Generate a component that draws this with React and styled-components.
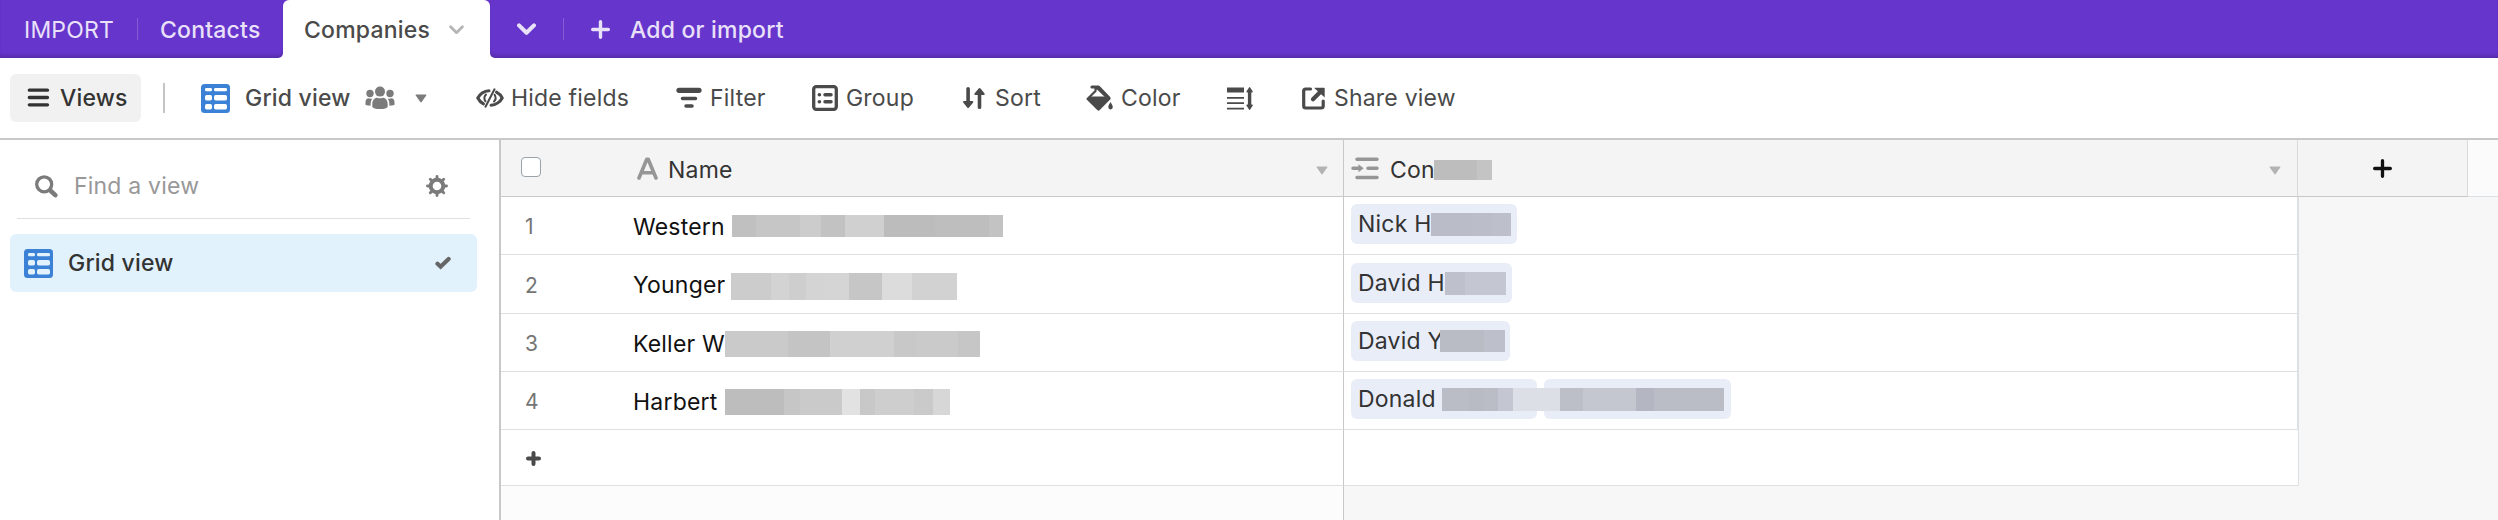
import React from 'react'
import styled, { createGlobalStyle } from 'styled-components'

const GlobalStyle = createGlobalStyle`
  * { box-sizing: border-box; }
  body {
    margin: 0;
    font-family: Inter, "Liberation Sans", sans-serif;
    font-size: 23px;
    letter-spacing: 0.2px;
    color: #333;
    background: #fff;
  }
  svg { display: block; flex: none; }
`

const Page = styled.div`
  display: flex;
  flex-direction: column;
  width: 2498px;
  height: 520px;
  overflow: hidden;
`

const Label = styled.span`
  display: block;
  flex: none;
  width: ${p => p.$w}px;
  margin-left: ${p => p.$ml || 0}px;
  font-weight: ${p => p.$weight || 400};
  line-height: 28px;
  white-space: nowrap;
`
const Gap = styled.div`
  flex: none;
  width: ${p => p.$w}px;
`
const Spacer = styled.div`
  flex: 1;
`

// table tabs
const TabBar = styled.div`
  display: flex;
  flex: none;
  height: 58px;
  color: #e9e0f9;
  background: #fff;
`
const TabGroup = styled.div`
  display: flex;
  flex: ${p => (p.$grow ? 1 : 'none')};
  background: #6635cc;
  border-radius: ${p => (p.$grow ? '0 0 0 5px' : '0 0 5px 0')};
  box-shadow: inset 0 -4px 4px -2px rgba(0, 0, 0, 0.2);
`
const ActiveSlot = styled.div`
  background: linear-gradient(#6635cc 10px, #fff 10px);
`
const Tab = styled.div`
  display: flex;
  align-items: center;
  height: 58px;
  padding: 1px 0 0 ${p => p.$pad}px;
  width: ${p => p.$w}px;
`
const ActiveTab = styled(Tab)`
  color: #4a4a4a;
  background: #fff;
  border-radius: 6px 6px 0 0;
`
const TabDivider = styled.div`
  width: 1px;
  height: 22px;
  margin-top: 18px;
  background: rgba(255, 255, 255, 0.2);
`

// toolbar
const Toolbar = styled.div`
  display: flex;
  flex: none;
  align-items: center;
  height: 82px;
  padding-left: 10px;
  border-bottom: 2px solid #c8c8c8;
  color: #4a4a4a;
`
const ViewsButton = styled.div`
  display: flex;
  align-items: center;
  width: 131px;
  height: 48px;
  padding-left: 17px;
  border-radius: 6px;
  background: #f1f1f1;
  color: #333;
`
const ToolbarDivider = styled.div`
  width: 2px;
  height: 30px;
  margin: 0 36px 0 22px;
  background: #c4c4c4;
`
const Tool = styled.div`
  display: flex;
  align-items: center;
  width: ${p => p.$w}px;
`

const Body = styled.div`
  display: flex;
  flex: 1;
`

// sidebar
const Sidebar = styled.div`
  width: 501px;
  padding: 0 22px 0 10px;
  border-right: 2px solid #c8c8c8;
`
const Search = styled.div`
  display: flex;
  align-items: center;
  height: 79px;
  margin: 0 7px;
  padding: 14px 22px 0 18px;
  border-bottom: 1px solid #e0e0e0;
  color: #989898;
`
const ViewItem = styled.div`
  display: flex;
  align-items: center;
  height: 58px;
  margin-top: 15px;
  padding: 0 26px 0 14px;
  border-radius: 6px;
  background: #e1f2fd;
`

// grid
const Grid = styled.div`
  flex: 1;
  background: #f7f7f7;
`
const Row = styled.div`
  display: flex;
  height: ${p => p.$h}px;
`
const Cell = styled.div`
  display: flex;
  align-items: center;
  border-bottom: 1px solid #dfdfdf;
  background: #fff;
`
const NameCell = styled(Cell)`
  width: 843px;
  padding-top: 2px;
  border-right: 1px solid #c8c8c8;
  color: #111;
`
const LinkCell = styled(Cell)`
  align-items: flex-start;
  width: 955px;
  padding: ${p => p.$pt || 0}px 0 0 7px;
  border-right: ${p => p.$edge || 2}px solid #dbe0e5;
`
const NameHead = styled(Cell)`
  width: 843px;
  padding-top: 4px;
  border-right: 1px solid #c8c8c8;
  border-bottom-color: #c8c8c8;
  background: #f4f4f4;
`
const LinkHead = styled(NameHead)`
  width: 954px;
  padding-left: 7px;
  border-right-color: #dadada;
`
const HeadIcon = styled.div`
  margin-bottom: 3px;
`
const AddFieldCell = styled(Cell)`
  justify-content: center;
  width: 170px;
  padding-top: 1px;
  border-right: 1px solid #dadada;
  border-bottom-color: #c8c8c8;
  background: #f4f4f4;
  color: #111;
`
const HeadRest = styled.div`
  flex: 1;
  border-bottom: 1px solid #dbe0e5;
  background: #fbfbfb;
`
const EmptyName = styled.div`
  width: 843px;
  border-right: 1px solid #c8c8c8;
  background: #fcfcfc;
`
const Checkbox = styled.div`
  width: 20px;
  height: 20px;
  margin: 0 96px 6px 20px;
  border: 1px solid #98a2aa;
  border-radius: 4px;
  background: #fff;
`
const RowNumber = styled.div`
  width: 132px;
  padding-left: 24px;
  font-size: 21px;
  color: #757575;
`
const AddRow = styled.div`
  padding-left: 25px;
  color: #4a4a4a;
`
const Pill = styled.div`
  display: flex;
  align-items: center;
  width: ${p => p.$w}px;
  height: 40px;
  margin-right: 7px;
  padding-left: 7px;
  border-radius: 6px;
  background: #e9edf8;
`

// blocks that hide the rest of a name, may run over into the next pill
const MaskBar = styled.div`
  display: flex;
  flex: none;
  position: relative;
  height: ${p => p.$h}px;
  margin-top: ${p => p.$mt || 0}px;
`
const MaskBlock = styled.div`
  width: ${p => p.$w}px;
  background: ${p => p.$c};
`

const Mask = ({ h, mt, blocks }) => (
  <MaskBar $h={h} $mt={mt}>
    {blocks.map(([w, c], i) => <MaskBlock key={i} $w={w} $c={c} />)}
  </MaskBar>
)

const GridIcon = ({ hole = '#fff' }) => (
  <svg width="29" height="29" viewBox="0 0 29 29">
    <rect width="29" height="29" rx="3.5" fill="#3b82d6" />
    <g fill={hole}>
      <rect x="4" y="4" width="7" height="3.3" rx="1.4" />
      <rect x="13" y="4" width="13" height="3.3" rx="1.4" />
      <rect x="4" y="11" width="7" height="5.5" rx="1.7" />
      <rect x="13" y="11" width="13" height="5.5" rx="1.7" />
      <rect x="4" y="20" width="7" height="5.5" rx="1.7" />
      <rect x="13" y="20" width="13" height="5.5" rx="1.7" />
    </g>
  </svg>
)

const MenuIcon = () => (
  <svg width="23" height="20" viewBox="0 0 23 20" stroke="currentColor" strokeWidth="3.3" strokeLinecap="round">
    <path d="M2.3 2.200h18.200M2.300 9.500h18.200M2.300 16.800h18.200" />
  </svg>
)

const ChevronIcon = ({ w = 14, stroke = 2.6, color = 'currentColor' }) => (
  <svg width={w} height={w * 0.66} viewBox="0 0 14 9.2" fill="none" stroke={color} strokeWidth={stroke} strokeLinecap="round" strokeLinejoin="round">
    <path d="M1.5 1.7 7 7.2l5.5-5.5" />
  </svg>
)

const PlusIcon = ({ size = 20, stroke = 3.4 }) => (
  <svg width={size} height={size} viewBox={`0 0 ${size} ${size}`} stroke="currentColor" strokeWidth={stroke} strokeLinecap="round">
    <path d={`M${size / 2} ${stroke / 2}V${size - stroke / 2}M${stroke / 2} ${size / 2}H${size - stroke / 2}`} />
  </svg>
)

const CaretIcon = ({ color = '#b3b3b3' }) => (
  <svg width="12" height="9" viewBox="0 0 12 9">
    <path d="M1.2.5h9.600q.9 0 .4.900L6.700 8q-.7.900-1.400 0L.800 1.400Q.3.500 1.200.5Z" fill={color} />
  </svg>
)

const PeopleIcon = () => (
  <svg width="30" height="24" viewBox="0 0 30 24" fill="#7b7b7b">
    <circle cx="15" cy="5.6" r="5" />
    <circle cx="5" cy="7.5" r="3.7" />
    <circle cx="25" cy="7.5" r="3.7" />
    <path d="M7.3 18c0-4.500 3-6.300 5-6.300 1.800.8 3.600.8 5.400 0 2 0 5 1.800 5 6.300v2.700q-1 2.300-7.700 2.300t-7.700-2.300Z" />
    <path d="M.5 16.500c0-3 1.500-4 3-4.200 1.500.6 2.800.5 4 .2C5.800 14.500 5.500 17 5.600 19.700Q.5 19.500.5 18.500ZM29.500 16.500c0-3-1.500-4-3-4.200-1.500.6-2.800.5-4 .2 1.700 2 2 4.500 1.900 7.200q5.100-.2 5.100-1.200Z" />
  </svg>
)

const HideIcon = () => (
  <svg width="28" height="20" viewBox="0 0 28 20" fill="none" stroke="currentColor" strokeLinecap="round">
    <path d="M13 2.700C8 2.700 3.500 6.500 1.800 10c1.200 2.500 3.200 4.600 5.700 5.900M15 17.300c5-.2 9.500-3.800 11.200-7.300-1.200-2.500-3.200-4.600-5.700-5.900" strokeWidth="3" />
    <path d="M10 6.500c-1.800 1.800-1.800 4.800-.6 6.800M18 13.500c1.800-1.800 1.800-4.800.6-6.800" strokeWidth="2" />
    <path d="M18.500 1.300 9.500 18.700" strokeWidth="2" />
  </svg>
)

const FilterIcon = () => (
  <svg width="26" height="22" viewBox="0 0 26 22" stroke="currentColor" strokeLinecap="round">
    <path d="M3 3.300h20" strokeWidth="5.2" />
    <path d="M6.500 11.500h13M10 19h6" strokeWidth="3.5" />
  </svg>
)

const GroupIcon = () => (
  <svg width="26" height="26" viewBox="0 0 26 26" fill="none" stroke="currentColor" strokeLinecap="round">
    <rect x="1.7" y="1.7" width="22.6" height="22.6" rx="2.5" strokeWidth="3.3" />
    <path d="M7.300 9.700h.2M13 9.700h6M7.300 16.700h.2M13 16.700h6" strokeWidth="3.5" />
  </svg>
)

const SortIcon = () => (
  <svg width="22" height="22" viewBox="0 0 22 22" fill="currentColor">
    <path d="M3.300 1.500q0-1.500 1.800-1.500t1.800 1.500V14h2.400q1.600.2.700 1.700L6 20.500q-.9 1-1.800 0L.4 15.700Q-.5 14.200.9 14h2.400Z" />
    <path d="M14.700 20.500q0 1.500 1.800 1.500t1.800-1.500V8h2.400q1.600-.2.700-1.700L17.500 1.500q-.9-1-1.800 0L11.700 6.300Q10.800 7.800 12.300 8h2.400Z" />
  </svg>
)

const ColorIcon = () => (
  <svg width="27" height="26" viewBox="0 0 27 26">
    <path d="M6 2h6.500L23 13" fill="none" stroke="currentColor" strokeWidth="3.2" strokeLinejoin="round" strokeLinecap="round" />
    <path d="M9.500 2.500v3.500L2 13.500h20L12 4Z" fill="none" stroke="currentColor" strokeWidth="2.2" strokeLinejoin="round" />
    <path d="M.6 13.500 3.500 11.500h18l2.600 2q.4.500 0 1L13.500 25.300q-1 .8-2 0L.6 14.500q-.5-.5 0-1Z" fill="currentColor" />
    <path d="M24.500 17c-1.200 2-2.200 3.600-2.200 5.100a2.200 2.400 0 0 0 4.500 0c0-1.500-1.100-3.100-2.300-5.100Z" fill="currentColor" />
  </svg>
)

const RowHeightIcon = () => (
  <svg width="26" height="23" viewBox="0 0 26 23" fill="currentColor">
    <path d="M0 .5h17v5H0ZM0 10h17v1.700H0ZM0 15.300h17v1.700H0ZM0 20.800h17v1.700H0Z" />
    <path d="M22.200.3q.4-.4.800 0l2.800 4.200q.2.800-.8.900h-.7v12.200h.7q1 .1.800.9l-2.800 4.200q-.4.400-.8 0l-2.800-4.200q-.2-.8.800-.9h.7V5.400h-.7q-1-.1-.8-.9Z" />
  </svg>
)

const ShareIcon = () => (
  <svg width="23" height="23" viewBox="0 0 23 23">
    <path d="M8.500 2H3.700q-2 0-2 2v15q0 2 2 2h15.500q2 0 2-2v-5" fill="none" stroke="currentColor" strokeWidth="3.2" strokeLinecap="round" />
    <path d="m11 12.300 7-7" stroke="currentColor" strokeWidth="4.2" strokeLinecap="round" />
    <path d="M12.500.7H22q.7 0 .7.700v9.200L12.500 1.300Z" fill="currentColor" />
  </svg>
)

const SearchIcon = () => (
  <svg width="23" height="23" viewBox="0 0 23 23" fill="none" stroke="#7b7b7b" strokeLinecap="round">
    <circle cx="9.2" cy="9.3" r="7.5" strokeWidth="3.3" />
    <path d="m15.300 15.500 5 4.700" strokeWidth="4.5" />
  </svg>
)

const GearIcon = () => (
  <svg width="22" height="22" viewBox="-11 -11 22 22" stroke="#7b7b7b" fill="none">
    <circle r="6.3" strokeWidth="4" />
    {[0, 45, 90, 135].map(a => (
      <path key={a} d="M0-9.500V-7M0 9.500V7" transform={`rotate(${a})`} strokeWidth="2.9" strokeLinecap="round" />
    ))}
  </svg>
)

const CheckIcon = () => (
  <svg width="16" height="14" viewBox="0 0 16 14" fill="none" stroke="#666" strokeWidth="4.2" strokeLinecap="round">
    <path d="M2.500 7.800 5.600 10.700 13.600 3" />
  </svg>
)

const TextFieldIcon = () => (
  <svg width="21" height="23" viewBox="0 0 21 23" fill="none" stroke="#969696" strokeWidth="3.6" strokeLinecap="round" strokeLinejoin="round">
    <path d="M2 21 9.800 2.200h1.400L19 21M5 15.800h11" />
  </svg>
)

const LinkFieldIcon = () => (
  <svg width="28" height="23" viewBox="0 0 28 23" fill="none" stroke="#969696" strokeWidth="3.5" strokeLinecap="round">
    <path d="M6 2.200h20M17 11.300h9M6 20.500h20M2 11.300h7" />
    <path d="M7.500 7.300v8l5.200-4Z" fill="#969696" stroke="none" />
  </svg>
)

const records = [
  {
    h: 58,
    name: 'Western', nameWidth: 99,
    mask: { h: 22, mt: -1, blocks: [[24, '#c0c0c0'], [44, '#c6c6c6'], [21, '#cccccc'], [24, '#c2c2c2'], [39, '#d0d0d0'], [51, '#bcbcbc'], [54, '#bebebe'], [14, '#c3c3c3']] },
    contact: 'Nick H', contactWidth: 73, pills: [166], pillTop: 7,
    contactMask: { h: 23, mt: 1, blocks: [[42, '#babdc7'], [19, '#bbbec8'], [19, '#bdc0ca']] }
  },
  {
    h: 59,
    name: 'Younger', nameWidth: 98,
    mask: { h: 27, mt: 3, blocks: [[40, '#cccccc'], [18, '#d3d3d3'], [17, '#cecece'], [19, '#d4d4d4'], [24, '#d5d5d5'], [33, '#c6c6c6'], [30, '#dcdcdc'], [45, '#d2d2d2']] },
    contact: 'David H', contactWidth: 87, pills: [161], pillTop: 8,
    contactMask: { h: 23, mt: 1, blocks: [[20, '#bec1cb'], [41, '#c4c7d1']] }
  },
  {
    h: 58,
    name: 'Keller W', nameWidth: 92,
    mask: { h: 26, mt: 1, blocks: [[63, '#cacaca'], [42, '#c4c4c4'], [64, '#d0d0d0'], [22, '#c8c8c8'], [42, '#cacaca'], [22, '#c6c6c6']] },
    contact: 'David Y', contactWidth: 82, pills: [159], pillTop: 7,
    contactMask: { h: 22, mt: 0, blocks: [[44, '#b9bcc4'], [21, '#bdc0ca']] }
  },
  {
    h: 58,
    name: 'Harbert', nameWidth: 92,
    mask: { h: 26, mt: 1, blocks: [[59, '#bdbdbd'], [16, '#c6c6c6'], [42, '#cacaca'], [18, '#e2e2e2'], [15, '#c8c8c8'], [39, '#cecece'], [19, '#cacaca'], [17, '#d7d7d7']] },
    contact: 'Donald', contactWidth: 84, pills: [186, 187], pillTop: 7,
    contactMask: { h: 23, mt: 1, blocks: [[27, '#babdc5'], [15, '#b8bbc4'], [14, '#babdc5'], [15, '#c4c7d1'], [47, '#dcdfe6'], [23, '#bcbfc8'], [53, '#c4c7d0'], [18, '#b4b7c1'], [70, '#babdc5']] }
  }
]

const App = () => {
  return (
    <Page>
      <GlobalStyle />
      <TabBar>
        <TabGroup>
          <Tab $w={137} $pad={24}><Label $w={100}>IMPORT</Label></Tab>
          <TabDivider />
          <Tab $w={145} $pad={22}><Label $w={110} $weight={500}>Contacts</Label></Tab>
        </TabGroup>
        <ActiveSlot>
          <ActiveTab $w={207} $pad={21}>
            <Label $w={145} $weight={500}>Companies</Label>
            <ChevronIcon w={15} color="#b5b5b5" />
          </ActiveTab>
        </ActiveSlot>
        <TabGroup $grow>
          <Tab $w={73} $pad={27}><ChevronIcon w={19} stroke={3} /></Tab>
          <TabDivider />
          <Tab $w={300} $pad={27}>
            <PlusIcon size={19} />
            <Label $w={160} $ml={20} $weight={500}>Add or import</Label>
          </Tab>
        </TabGroup>
      </TabBar>

      <Toolbar>
        <ViewsButton>
          <MenuIcon />
          <Label $w={70} $ml={10} $weight={500}>Views</Label>
        </ViewsButton>
        <ToolbarDivider />
        <Tool $w={275}>
          <GridIcon />
          <Label $w={120} $ml={15} $weight={500}>Grid view</Label>
          <PeopleIcon />
          <Gap $w={20} />
          <CaretIcon color="#7b7b7b" />
        </Tool>
        <Tool $w={200}><HideIcon /><Label $w={120} $ml={7}>Hide fields</Label></Tool>
        <Tool $w={136}><FilterIcon /><Label $w={60} $ml={8}>Filter</Label></Tool>
        <Tool $w={151}><GroupIcon /><Label $w={70} $ml={8}>Group</Label></Tool>
        <Tool $w={123}><SortIcon /><Label $w={50} $ml={10}>Sort</Label></Tool>
        <Tool $w={141}><ColorIcon /><Label $w={62} $ml={8}>Color</Label></Tool>
        <Tool $w={75}><RowHeightIcon /></Tool>
        <Tool $w={180}><ShareIcon /><Label $w={124} $ml={9}>Share view</Label></Tool>
      </Toolbar>

      <Body>
        <Sidebar>
          <Search>
            <SearchIcon />
            <Label $w={130} $ml={16}>Find a view</Label>
            <Spacer />
            <GearIcon />
          </Search>
          <ViewItem>
            <GridIcon hole="#e1f2fd" />
            <Label $w={110} $ml={15} $weight={500}>Grid view</Label>
            <Spacer />
            <CheckIcon />
          </ViewItem>
        </Sidebar>

        <Grid>
          <Row $h={57}>
            <NameHead>
              <Checkbox />
              <HeadIcon><TextFieldIcon /></HeadIcon>
              <Label $w={70} $ml={10}>Name</Label>
              <Spacer />
              <CaretIcon />
              <Gap $w={15} />
            </NameHead>
            <LinkHead>
              <HeadIcon><LinkFieldIcon /></HeadIcon>
              <Label $w={44} $ml={11}>Con</Label>
              <Mask h={20} blocks={[[43, '#bdbdbd'], [15, '#c4c4c4']]} />
              <Spacer />
              <CaretIcon />
              <Gap $w={16} />
            </LinkHead>
            <AddFieldCell><PlusIcon size={19} stroke={3.3} /></AddFieldCell>
            <HeadRest />
          </Row>
          {records.map((r, i) => (
            <Row key={r.name} $h={r.h}>
              <NameCell>
                <RowNumber>{i + 1}</RowNumber>
                <Label $w={r.nameWidth}>{r.name}</Label>
                <Mask {...r.mask} />
              </NameCell>
              <LinkCell $pt={r.pillTop}>
                {r.pills.map((w, n) => (
                  <Pill key={n} $w={w}>
                    {n === 0 && <Label $w={r.contactWidth}>{r.contact}</Label>}
                    {n === 0 && <Mask {...r.contactMask} />}
                  </Pill>
                ))}
              </LinkCell>
            </Row>
          ))}
          <Row $h={56}>
            <NameCell><AddRow><PlusIcon size={15} stroke={4} /></AddRow></NameCell>
            <LinkCell $edge={1} />
          </Row>
          <Row $h={34}><EmptyName /></Row>
        </Grid>
      </Body>
    </Page>
  )
}

export default App
